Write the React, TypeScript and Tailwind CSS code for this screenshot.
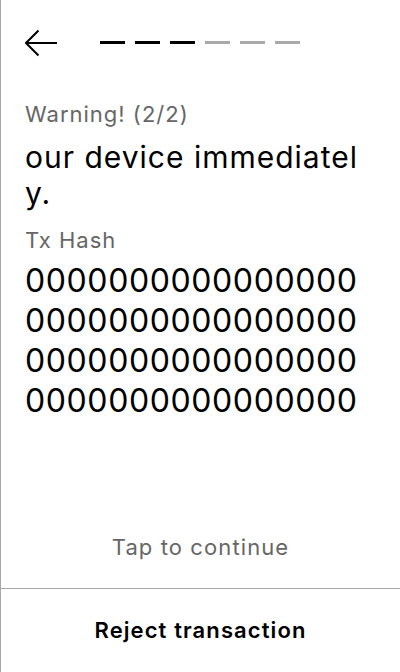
import React from 'react';

const steps = [true, true, true, false, false, false];

const txHash = '0'.repeat(64);

const App: React.FC = () => {
    return (
        <div
            className="w-[400px] h-[672px] bg-white border-l border-[#a9a9a9] flex flex-col text-black"
            style={{ fontFamily: 'Inter, "Liberation Sans", sans-serif' }}
        >
            {/* Header */}
            <div className="flex items-center h-[86px] pl-[24px]">
                <button className="w-[32px] h-[28px] flex items-center">
                    <svg width="32" height="28" viewBox="0 0 32 28" fill="none" stroke="currentColor" strokeWidth={2}>
                        <path d="M1 14h31" />
                        <path d="M13.5 1.5L1 14l12.5 12.5" />
                    </svg>
                </button>
                <div className="flex gap-[10px] ml-[43px] -mt-[2px]">
                    {steps.map((done, i) => (
                        <div key={i} className={`w-[25px] h-[3px] ${done ? 'bg-black' : 'bg-[#a9a9a9]'}`} />
                    ))}
                </div>
            </div>

            {/* Content */}
            <div className="flex-1 px-[24px] pt-[14px]">
                <p className="text-[22px] leading-[28px] tracking-[1px] text-[#666666]">Warning! (2/2)</p>
                <p className="text-[30px] leading-[36px] tracking-[1px] break-all mt-[11px]">our device immediately.</p>
                <p className="text-[22px] leading-[28px] tracking-[1px] text-[#666666] mt-[15px]">Tx Hash</p>
                <p className="text-[32px] leading-[40px] tracking-[0.6px] break-all mt-[7px]">{txHash}</p>
            </div>

            {/* Footer */}
            <div className="flex justify-center pb-[26px]">
                <span className="text-[22px] leading-[30px] tracking-[1.1px] text-[#666666]">Tap to continue</span>
            </div>
            <div className="border-t border-[#a9a9a9] h-[84px] flex items-center justify-center">
                <span className="text-[22px] font-semibold tracking-[1.1px]">Reject transaction</span>
            </div>
        </div>
    );
};

export default App;
